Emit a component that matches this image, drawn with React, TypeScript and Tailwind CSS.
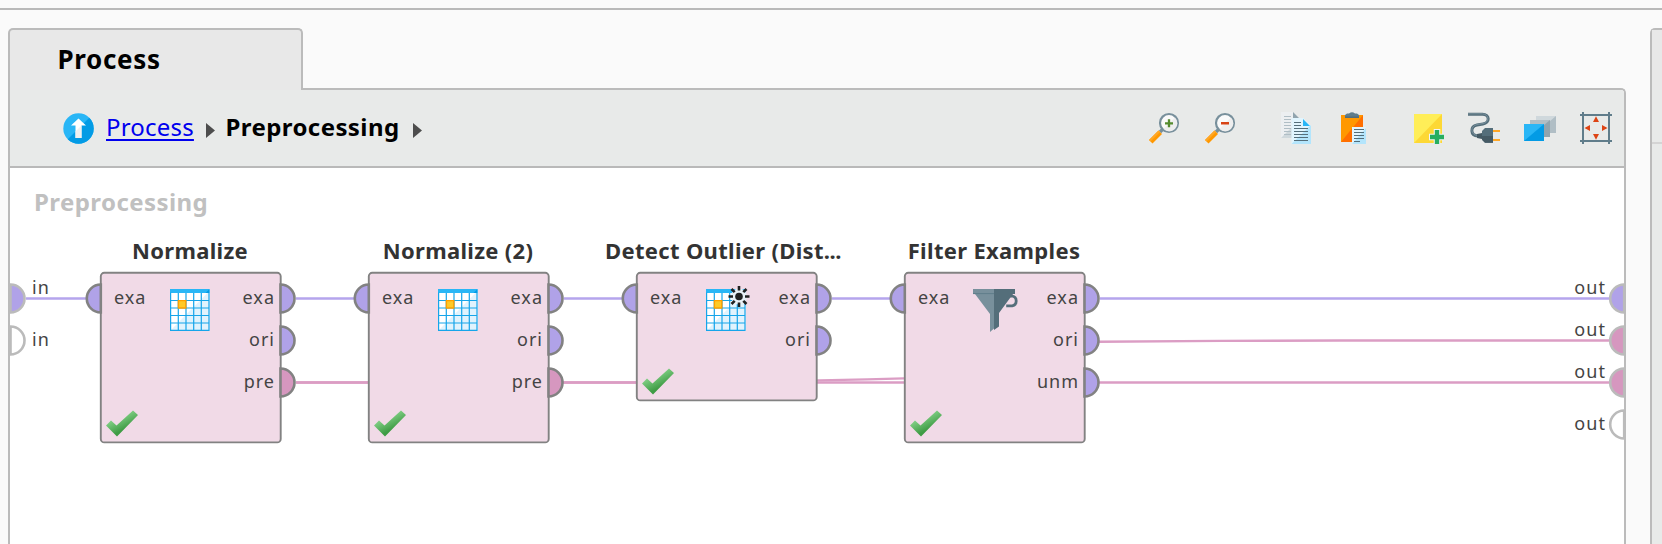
import type { ReactNode } from "react";

const PURPLE = "#b0a2e8";
const PINK = "#d697bf";

function Icon({ children }: { children: ReactNode }) {
  return (
    <svg className="block size-8 shrink-0" viewBox="0 0 32 32" fill="none">
      {children}
    </svg>
  );
}

function Magnifier({ plus }: { plus?: boolean }) {
  return (
    <Icon>
      <path d="M15.5 16.5L12 20" stroke="#78909c" strokeWidth="3.4" />
      <path d="M1 28L10.5 18.6L14 22L4.5 31.6Z" fill="#ff9800" />
      <path d="M1 28L10.5 18.6L12 20L2.5 29.5Z" fill="#ffa726" />
      <circle cx="21" cy="11" r="9" fill="#fafafa" stroke="#78909c" strokeWidth="2.2" />
      <path d="M15.5 17A8 8 0 0 0 27 5.500Z" fill="#eeeeee" />
      {plus ? (
        <path d="M17 11.300h8M21 7.300v8" stroke="#558b2f" strokeWidth="2.3" />
      ) : (
        <path d="M17 11.300h8" stroke="#d84315" strokeWidth="2.4" />
      )}
    </Icon>
  );
}

function CopyIcon() {
  return (
    <Icon>
      <path d="M1 0h12l7 7v19H1z" fill="#eceff1" />
      <path d="M20 7v19H1z" fill="#cfd8dc" />
      <path d="M13 0l6 6h-6z" fill="#90a4ae" />
      <path d="M4 4.500h7M4 7.500h7M4 10.500h7M4 13.500h7M4 16.500h7M4 19.500h7M4 22.500h7" stroke="#b0bec5" strokeWidth="1" />
      <path d="M11.500 6H23l8 8v18H11.500z" fill="#e1f5fe" />
      <path d="M31 13v19H11.500z" fill="#b3e5fc" />
      <path d="M23 7v7h7z" fill="#29b6f6" />
      <path d="M14 10.500h7M14 13.500h7M14 16.500h14M14 19.500h14M14 22.500h14M14 25.500h14M14 28.500h14" stroke="#546e7a" strokeWidth="1" />
    </Icon>
  );
}

function PasteIcon() {
  return (
    <Icon>
      <path d="M5 3h22v27H5z" fill="#ff9800" />
      <path d="M27 3v27H5z" fill="#ff6f00" />
      <path d="M9 6V3l2-1.500h2Q16-1 19 1.500h2L23 3v3z" fill="#607d8b" />
      <path d="M9 4.500h14V6H9z" fill="#546e7a" />
      <path d="M16 15h14v17H16z" fill="#e1f5fe" />
      <path d="M30 16v16H16z" fill="#b3e5fc" />
      <path d="M18 17.500h10M18 20.500h10M18 23.500h10M18 26.500h10M18 29.500h6" stroke="#546e7a" strokeWidth="1" />
    </Icon>
  );
}

function NoteIcon() {
  return (
    <Icon>
      <path d="M2 2h28v29H2z" fill="#ffee58" />
      <path d="M30 2v29H2z" fill="#fdd835" />
      <path d="M25 17v16M17 25h16" stroke="#f5f5f5" strokeWidth="6.500" />
      <path d="M25 18v14M18 25h14" stroke="#27ae60" strokeWidth="4.400" />
    </Icon>
  );
}

function PlugIcon() {
  return (
    <Icon>
      <path d="M0 2.300h14.500C22 2.300 22 11 15 12L9 13C2 14.500 2 23.500 10 24" stroke="#546e7a" strokeWidth="3" />
      <path d="M0 1.800h14.500C21.500 2.300 21.500 10.500 15 11.500L9 12.500C2 14 2 23 10 23.500" stroke="#78909c" strokeWidth="1" />
      <path d="M9 22l5-1v6l-5-1z" fill="#455a64" />
      <path d="M14 19l3-3h8v14.700h-8l-3-3z" fill="#546e7a" />
      <path d="M14 24h11v6.700h-8l-3-3z" fill="#455a64" />
      <path d="M25 19h7M25 28h7" stroke="#ffa726" strokeWidth="2.200" />
    </Icon>
  );
}

function LayersIcon() {
  return (
    <Icon>
      <path d="M12 4h20v17H12z" fill="#cfd8dc" />
      <path d="M32 4v17H12z" fill="#b0bec5" />
      <path d="M6 8h20v17H6z" fill="#b0bec5" />
      <path d="M26 8v17H6z" fill="#90a4ae" />
      <path d="M0 12h20v17H0z" fill="#29b6f6" />
      <path d="M20 12v17H0z" fill="#039be5" />
    </Icon>
  );
}

function FitIcon() {
  return (
    <Icon>
      <path d="M3 0v32M29 0v32M0 3h32M0 29h32" stroke="#607d8b" strokeWidth="2" />
      <path d="M16 4.300l3 5.700h-6zM16 27.700l3-5.700h-6zM4.500 16l5.500-3v6zM27.500 16l-5.500-3v6z" fill="#dd4415" />
    </Icon>
  );
}

function Crumb() {
  return (
    <svg className="mt-1 block h-[15px] w-[9px]" viewBox="0 0 9 15">
      <path d="M0 0l9 7.500L0 15z" fill="#4d4d4d" />
    </svg>
  );
}

function TableIcon({ sun }: { sun?: boolean }) {
  return (
    <svg className="absolute left-[70px] top-[17px] h-[42px] w-10 overflow-visible" viewBox="0 0 40 42">
      <path d="M0 0h39.500v42H0z" fill="#fff" />
      <path d="M39.500 2v40H0z" fill="#e1f3fd" />
      <path d="M0 0h39.500v4H0z" fill="#29b6f6" />
      <path d="M39.500 0v4h-4z" fill="#039be5" />
      <path
        d="M.6 3.500v38M8.300 4v38M16 4v38M23.700 4v38M31.300 4v38M39 4v38M0 11.500h39.500M0 19h39.500M0 26.500h39.500M0 34h39.500M0 41.400h39.500"
        stroke="#16a5ea"
        strokeWidth="1.200"
      />
      <path d="M8.400 11.600h7.400v7.400H8.400z" fill="#ffca28" stroke="#ffa000" strokeWidth="1.400" />
      {sun && (
        <g transform="translate(33 7.500)">
          <circle r="8" fill="#e8f0f6" />
          <circle r="3.800" fill="#212121" />
          <path
            d="M0-6v-4.500M0 6v4.500M-6 0h-4.500M6 0h4.500M4.300-4.300l3.200-3.200M-4.300-4.300l-3.200-3.200M4.300 4.300l3.200 3.200M-4.300 4.300l-3.200 3.200"
            stroke="#212121"
            strokeWidth="2.600"
          />
        </g>
      )}
    </svg>
  );
}

function FunnelIcon() {
  return (
    <svg className="absolute left-[69px] top-[17px] h-[43px] w-[46px]" viewBox="0 0 46 43">
      <path d="M35.500 7h3.700a5 5 0 0 1 0 9.800h-6" fill="none" stroke="#546e7a" strokeWidth="2.800" />
      <path d="M0 0h21v39.500L17 43V25L2 5H0z" fill="#78909c" />
      <path d="M21 0h21v5h-2L26 24v13.500l-5 3.500z" fill="#546e7a" />
      <path d="M0 4.600h21" stroke="#607d8b" strokeWidth="1" />
    </svg>
  );
}

function Check() {
  return (
    <svg className="absolute bottom-[6px] left-[6px] h-[27px] w-8" viewBox="0 0 32 27">
      <defs>
        <linearGradient id="check" x1="0.3" y1="0.2" x2="0.65" y2="0.75">
          <stop offset="0.2" stopColor="#7ccb80" />
          <stop offset="0.9" stopColor="#3f9c45" />
        </linearGradient>
      </defs>
      <path d="M0 15.500L5 10.500L10.500 15.500L27 0.500L32 5L11 26.500Z" fill="url(#check)" />
    </svg>
  );
}

function Port({ x, y, side, fill, stroke = "#828282" }: { x: number; y: number; side: "left" | "right"; fill: string; stroke?: string }) {
  const sweep = side === "right" ? 1 : 0;
  return (
    <path
      d={`M${x} ${y - 14}A14 14 0 0 ${sweep} ${x} ${y + 14}Z`}
      fill={fill}
      stroke={stroke}
      strokeWidth="2.6"
    />
  );
}

type Operator = {
  title: string;
  truncated?: boolean;
  x: number;
  height: number;
  outputs: { name: string; fill: string }[];
  icon: ReactNode;
};

const operators: Operator[] = [
  {
    title: "Normalize",
    x: 90,
    height: 171,
    outputs: [{ name: "exa", fill: PURPLE }, { name: "ori", fill: PURPLE }, { name: "pre", fill: PINK }],
    icon: <TableIcon />,
  },
  {
    title: "Normalize (2)",
    x: 358,
    height: 171,
    outputs: [{ name: "exa", fill: PURPLE }, { name: "ori", fill: PURPLE }, { name: "pre", fill: PINK }],
    icon: <TableIcon />,
  },
  {
    title: "Detect Outlier (Dist",
    truncated: true,
    x: 626,
    height: 129,
    outputs: [{ name: "exa", fill: PURPLE }, { name: "ori", fill: PURPLE }],
    icon: <TableIcon sun />,
  },
  {
    title: "Filter Examples",
    x: 894,
    height: 171,
    outputs: [{ name: "exa", fill: PURPLE }, { name: "ori", fill: PURPLE }, { name: "unm", fill: PURPLE }],
    icon: <FunnelIcon />,
  },
];

function OperatorNode({ op }: { op: Operator }) {
  return (
    <div className="absolute top-[104px] w-[182px]" style={{ left: op.x, height: op.height }}>
      <svg className="absolute left-0 top-0 h-full w-full overflow-visible">
        <rect x="0.8" y="0.8" width="179.900" height={op.height - 1.4} rx="3.5" fill="#f1dae7" stroke="#828282" strokeWidth="1.900" />
        <Port x={0.8} y={26.5} side="left" fill={PURPLE} />
        {op.outputs.map((o, i) => (
          <Port key={o.name} x={180.5} y={26.5 + i * 42} side="right" fill={o.fill} />
        ))}
      </svg>
      <div className="absolute inset-x-0 -top-[37px] flex justify-center">
        <div
          className={
            op.truncated
              ? "relative -left-[4px] whitespace-nowrap text-[22px]/[30px] font-bold tracking-[0.32px] text-[#333]"
              : "relative -left-px whitespace-nowrap text-[22px]/[30px] font-bold tracking-[0.32px] text-[#333]"
          }
        >
          {op.title}
          {op.truncated && <span className="tracking-[-0.5px]">...</span>}
        </div>
      </div>
      <div className="relative flex h-full justify-between pl-[14px] pr-[7px] pt-[15px] text-[18px]/[20px] tracking-[1px] text-[#444]">
        <span>exa</span>
        <div className="flex flex-col items-end gap-[22px]">
          {op.outputs.map((o) => (
            <span key={o.name}>{o.name}</span>
          ))}
        </div>
      </div>
      {op.icon}
      <Check />
    </div>
  );
}

function Canvas() {
  return (
    <div className="relative min-h-0 flex-1 overflow-hidden bg-white">
      <div className="absolute left-6 top-[18px] text-[24px]/[32px] font-bold tracking-[0.42px] text-[#c0c0c0]">
        Preprocessing
      </div>
      <svg className="absolute left-0 top-0 h-[376px] w-[1614px]" fill="none" strokeWidth="2.4">
        <path d="M16 130.500H76M286 130.500H344M554 130.500H612M822 130.500H880M1090 130.500H1599" stroke="#b5a5ed" />
        <path d="M286 214.500H1599" stroke="#db9dc4" />
        <path
          d="M286 214.500H630C740 214.500 820 212.500 894 210.400C980 207 1000 174 1089 173.800C1180 173 1240 172.500 1330 172.500H1599"
          stroke="#db9dc4"
        />
        <Port x={0.5} y={130.5} side="right" fill={PURPLE} stroke="#bbb" />
        <Port x={0.5} y={172.5} side="right" fill="#fff" stroke="#bbb" />
        <Port x={1614.2} y={130.5} side="left" fill={PURPLE} stroke="#bbb" />
        <Port x={1614.2} y={172.5} side="left" fill={PINK} stroke="#bbb" />
        <Port x={1614.2} y={214.5} side="left" fill={PINK} stroke="#bbb" />
        <Port x={1614.2} y={256.5} side="left" fill="#fff" stroke="#bbb" />
      </svg>
      <div className="absolute left-[22px] top-[109px] flex flex-col gap-8 text-[18px]/[20px] tracking-[1.1px] text-[#444]">
        <span>in</span>
        <span>in</span>
      </div>
      <div className="absolute right-[18px] top-[109px] flex flex-col gap-[22px] text-[18px]/[20px] tracking-[1.1px] text-[#444]">
        <span>out</span>
        <span>out</span>
        <span>out</span>
        <span className="mt-[10px]">out</span>
      </div>
      {operators.map((op) => (
        <OperatorNode key={op.title} op={op} />
      ))}
    </div>
  );
}

export default function App() {
  return (
    <div className="flex h-[544px] w-[1662px] flex-col overflow-hidden bg-[#fafafa] font-['Noto_Sans','Open_Sans',sans-serif]">
      <div className="h-[10px] shrink-0 border-b-2 border-[#b9b9b9]" />
      <div className="flex min-h-0 flex-1 pl-2 pt-[18px]">
        <div className="flex w-[1618px] shrink-0 flex-col">
          <div className="relative z-10 -mb-[2px] flex h-[62px] w-[295px] shrink-0 items-center rounded-t-[5px] border-x-2 border-t-2 border-[#bbb] bg-[#e8e8e8] pb-[3px] pl-[47.5px] text-[26px]/[36px] font-bold tracking-[0.65px] text-black">
            Process
          </div>
          <div className="flex min-h-0 flex-1 flex-col overflow-hidden rounded-tr-[5px] border-x-2 border-t-2 border-[#bbb]">
            <div className="flex h-[78px] shrink-0 items-center border-b-2 border-[#b9b9b9] bg-[#e8eae9] pl-[52.5px] pr-3">
              <svg className="size-[31px]" viewBox="0 0 31 31">
                <circle cx="15.500" cy="15.500" r="15.200" fill="#29b6f6" />
                <path d="M26.250 4.750A15.200 15.200 0 0 1 4.750 26.250Z" fill="#039be5" />
                <path d="M15.500 5.500L23 12.500h-4.500V25h-6V12.500H8z" fill="#fff" />
                <path d="M18.500 12.500V25h-6v-6.500z" fill="#f0f0f0" />
              </svg>
              <a className="-mt-[3px] ml-[12.500px] text-[24px]/[32px] tracking-[0.2px] text-[#0000ee] underline decoration-2 underline-offset-[3px]">
                Process
              </a>
              <div className="ml-3">
                <Crumb />
              </div>
              <span className="-mt-[3px] ml-[10.500px] text-[24px]/[32px] font-bold tracking-[0.42px] text-black">Preprocessing</span>
              <div className="ml-[13px]">
                <Crumb />
              </div>
              <div className="ml-auto flex gap-11">
                <div className="flex gap-6">
                  <Magnifier plus />
                  <Magnifier />
                </div>
                <div className="flex gap-6">
                  <CopyIcon />
                  <PasteIcon />
                </div>
                <div className="flex gap-6">
                  <NoteIcon />
                  <PlugIcon />
                  <LayersIcon />
                  <FitIcon />
                </div>
              </div>
            </div>
            <Canvas />
          </div>
        </div>
        <div className="ml-6 flex w-4 shrink-0 flex-col rounded-tl-[5px] border-l-2 border-t-2 border-[#bbb] bg-[#e8eae9]">
          <div className="h-[60px] shrink-0 bg-[#e8e8e8]" />
          <div className="h-[54px] shrink-0 border-b-2 border-[#d4d4d4]" />
        </div>
      </div>
    </div>
  );
}
